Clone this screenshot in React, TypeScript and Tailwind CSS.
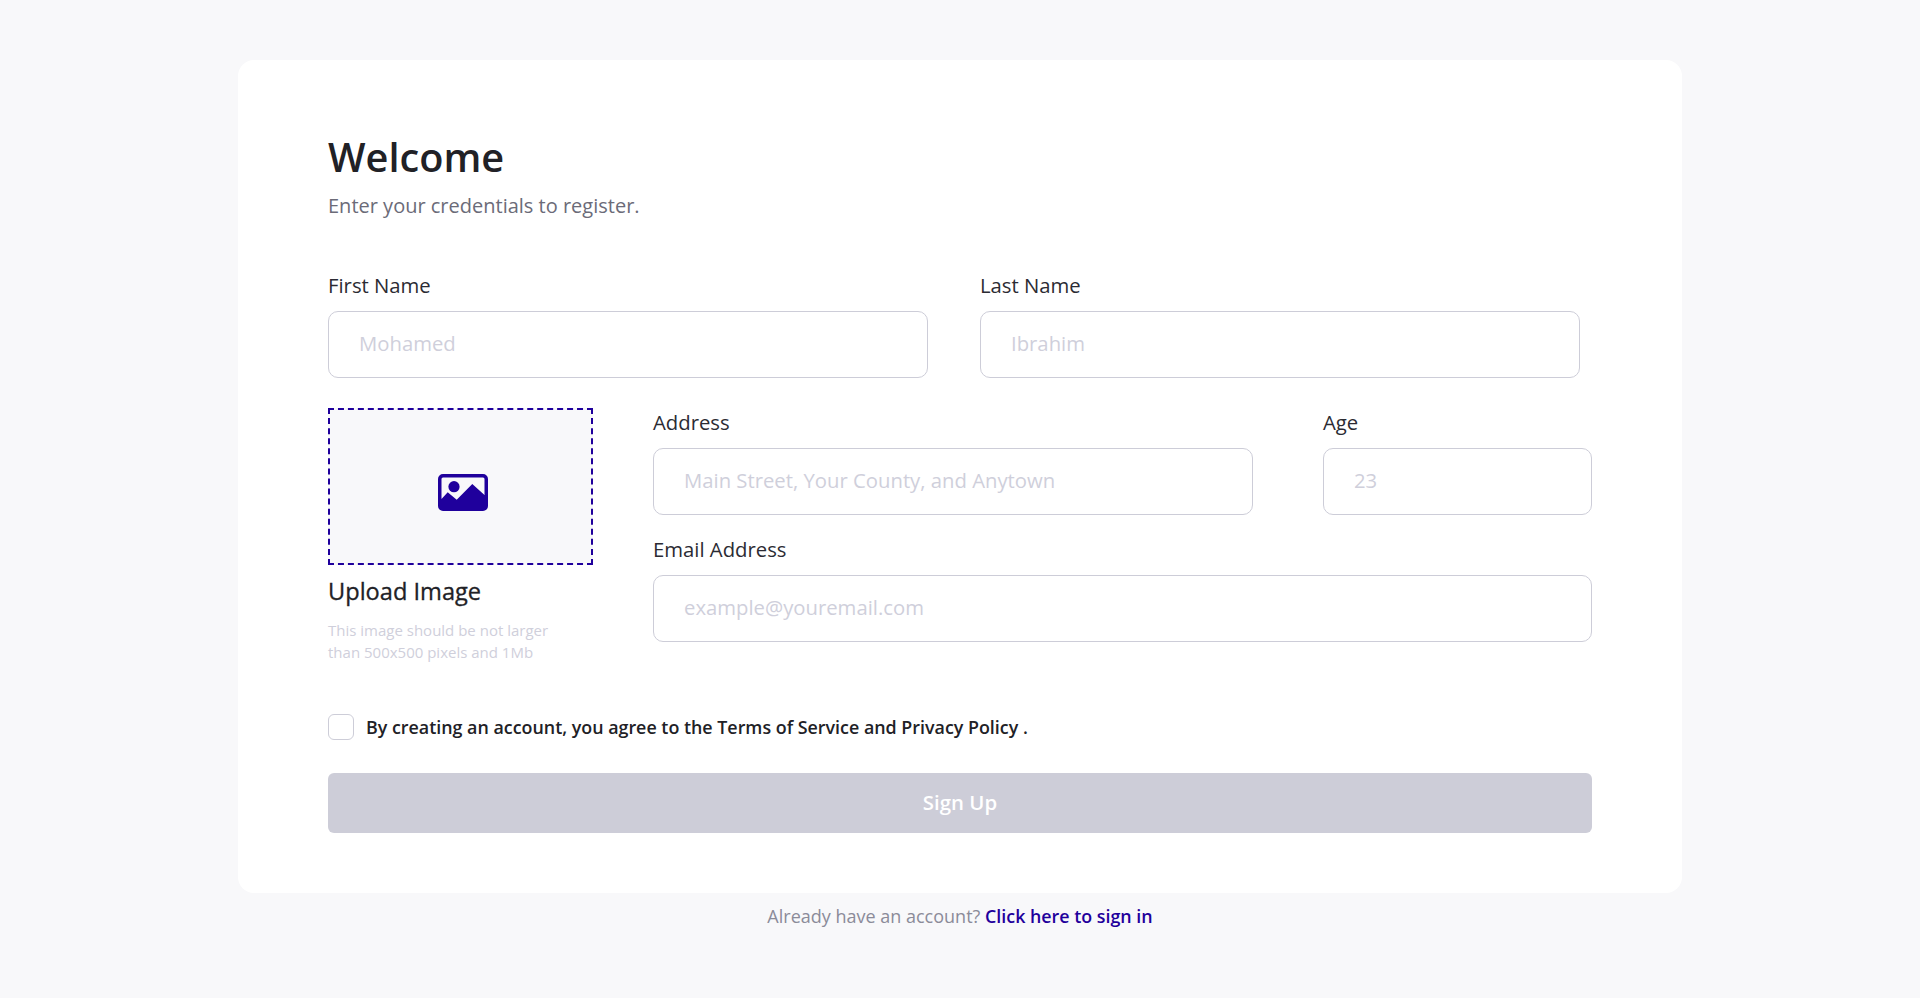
const font = { fontFamily: '"Open Sans", sans-serif' };

function Field({ label, placeholder, className }: { label: string; placeholder: string; className: string }) {
  return (
    <div className={className}>
      <label className="block text-[20.3px] leading-[27px] text-[#2b2b33]">{label}</label>
      <input
        type="text"
        placeholder={placeholder}
        className="mt-[12px] block h-[67px] w-full rounded-[10px] border border-[#cdcdd8] bg-white px-[30px] pb-[3px] text-[20.3px] outline-none placeholder:text-[#cfcfdb]"
      />
    </div>
  );
}

function ImageIcon() {
  return (
    <svg width="50" height="37" viewBox="0 0 50 37" className="block">
      <path
        fill="#1f009c"
        fillRule="evenodd"
        d="M5 0H45A5 5 0 0 1 50 5V32A5 5 0 0 1 45 37H5A5 5 0 0 1 0 32V5A5 5 0 0 1 5 0ZM5 3.5A1.5 1.5 0 0 0 3.5 5V25L9.7 18.3 18.7 25.7 34.3 10 46.5 21V5A1.5 1.5 0 0 0 45 3.5Z"
      />
      <circle cx="16" cy="12.7" r="5.6" fill="#1f009c" />
    </svg>
  );
}

export default function App() {
  return (
    <div style={font} className="min-h-[998px] bg-[#f8f8fa] pt-[60px]">
      <div className="mx-auto w-[1444px] rounded-[16px] bg-white px-[90px] pt-[70px] pb-[60px]">
        <h1 className="text-[39.7px] leading-[54px] font-semibold text-[#212126]">Welcome</h1>
        <p className="mt-[8px] text-[20px] leading-[27px] text-[#6b6b78]">Enter your credentials to register.</p>

        <div className="mt-[53px] flex gap-[52px]">
          <Field label="First Name" placeholder="Mohamed" className="w-[600px]" />
          <Field label="Last Name" placeholder="Ibrahim" className="w-[600px]" />
        </div>

        <div className="mt-[30px] flex gap-[60px]">
          <div className="w-[265px]">
            <div className="flex h-[157px] items-center justify-center border-2 border-dashed border-[#1f009c] bg-[#f8f8fa] pt-[11px] pl-[5px]">
              <ImageIcon />
            </div>
            <h2 className="mt-[10px] text-[23.6px] leading-[33px] text-[#212126] [-webkit-text-stroke:0.3px_#212126]">
              Upload Image
            </h2>
            <p className="mt-[11px] max-w-[235px] text-[15px] leading-[22px] text-[#cfcfdb]">
              This image should be not larger than 500x500 pixels and 1Mb
            </p>
          </div>

          <div className="flex-1 pt-[1px]">
            <div className="flex gap-[70px]">
              <Field label="Address" placeholder="Main Street, Your County, and Anytown" className="w-[600px]" />
              <Field label="Age" placeholder="23" className="flex-1" />
            </div>
            <Field label="Email Address" placeholder="example@youremail.com" className="mt-[21px]" />
          </div>
        </div>

        <div className="mt-[51px] flex items-center gap-[12px]">
          <span className="h-[26px] w-[26px] rounded-[6px] border border-[#cdcdd8] bg-white" />
          <span className="text-[17.87px] leading-[26px] font-semibold text-[#212126]">
            By creating an account, you agree to the Terms of Service and Privacy Policy .
          </span>
        </div>

        <button className="mt-[33px] block h-[60px] w-full rounded-[6px] bg-[#cdcdd8] pb-[2px] text-[20.4px] font-semibold text-white">
          Sign Up
        </button>
      </div>

      <p className="mt-[10px] text-center text-[18px] leading-[26px] text-[#8b8b99]">
        Already have an account? <a className="text-[17.85px] font-semibold text-[#1f009c]">Click here to sign in</a>
      </p>
    </div>
  );
}
